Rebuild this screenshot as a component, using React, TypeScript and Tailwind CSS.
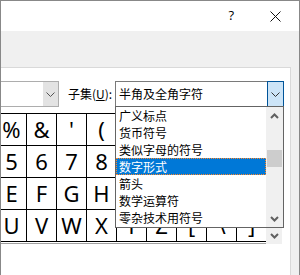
import React from 'react';

const cjk = { fontFamily: '"Noto Sans CJK SC", "Noto Sans", sans-serif' };

// cells hidden under the open dropdown list are left blank
const rows = [
  ['%', '&', "'", '(', '', '', '', '', ''],
  ['5', '6', '7', '8', '', '', '', '', ''],
  ['E', 'F', 'G', 'H', '', '', '', '', ''],
  ['U', 'V', 'W', 'X', 'Y', 'Z', '[', '\\', ']'],
];

const subsets = ['广义标点', '货币符号', '类似字母的符号', '数字形式', '箭头', '数学运算符', '零杂技术用符号'];

function ThinChevron({ color = '#444' }: { color?: string }) {
  return (
    <svg width="9" height="5" viewBox="0 0 9 5">
      <path d="M0.5 0.5 L4.5 4.5 L8.5 0.5" stroke={color} fill="none" strokeWidth="1" />
    </svg>
  );
}

function ScrollChevron({ up }: { up?: boolean }) {
  return (
    <svg width="9" height="6" viewBox="0 0 9 6">
      <path d={up ? 'M1 5 L4.5 1.5 L8 5' : 'M1 1 L4.5 4.5 L8 1'} stroke="#606060" fill="none" strokeWidth="2" />
    </svg>
  );
}

export default function App() {
  return (
    <div className="w-[300px] h-[275px] overflow-hidden bg-[#f0f0f0] border-x border-t border-[#888888] flex flex-col">
      {/* title bar */}
      <div className="h-[30px] shrink-0 bg-white flex items-center justify-end">
        <span className="text-[13px] text-black mr-[36px]" style={{ fontFamily: '"Open Sans", sans-serif' }}>?</span>
        <svg width="11" height="11" viewBox="0 0 11 11" className="mr-[18px]">
          <path d="M0.5 0.5 L10.5 10.5 M10.5 0.5 L0.5 10.5" stroke="#111" strokeWidth="1" />
        </svg>
      </div>

      <div className="flex-1 pt-[36px] pr-[8px]">
        <div className="h-full bg-white border-t border-r border-[#d9d9d9] pt-[13px]">
          {/* font + subset row */}
          <div className="flex items-center h-[26px] relative z-10">
            <div className="ml-[-104px] w-[162px] h-[26px] border border-[#adadad] flex bg-white">
              <div className="flex-1" />
              <div className="w-[15px] bg-[#e3e3e3] flex items-center justify-center">
                <ThinChevron color="#555" />
              </div>
            </div>
            <div className="ml-[9px] w-[47px] text-[12px] text-black leading-[26px]" style={cjk}>
              子集(<span className="underline">U</span>):
            </div>
            <div className="relative w-[169px] h-[26px] border border-[#7a7a7a] flex bg-white">
              <div className="flex-1 pl-[3px] text-[12px] leading-[24px] text-black" style={cjk}>半角及全角字符</div>
              <div className="w-[17px] -my-[1px] -mr-[1px] bg-[#cce4f7] border border-[#005499] flex items-center justify-center">
                <ThinChevron color="#333" />
              </div>
              {/* dropdown list */}
              <div className="absolute left-[-1px] top-[24px] w-[169px] h-[122px] border border-[#646464] bg-white flex">
                <div className="flex-1 flex flex-col">
                  {subsets.map((s) => (
                    <div
                      key={s}
                      className={
                        s === '数字形式'
                          ? 'h-[17px] pl-[2px] text-[12px] leading-[15px] text-white bg-[#0078d7] border border-dotted border-[#ff8728]'
                          : 'h-[17px] pl-[3px] text-[12px] leading-[17px] text-black'
                      }
                      style={cjk}
                    >
                      {s}
                    </div>
                  ))}
                </div>
                <div className="w-[17px] bg-[#f0f0f0] flex flex-col">
                  <div className="h-[17px] flex items-center justify-center">
                    <ScrollChevron up />
                  </div>
                  <div className="flex-1 pt-[26px]">
                    <div className="mx-[1px] h-[17px] bg-[#cdcdcd]" />
                  </div>
                  <div className="h-[17px] flex items-center justify-center">
                    <ScrollChevron />
                  </div>
                </div>
              </div>
            </div>
          </div>

          {/* symbol grid */}
          <div className="mt-[6px] ml-[-4px] flex">
            <div className="border-t border-black pb-[1px] border-b border-b-[#a0a0a0]">
              {rows.map((r, i) => (
                <div key={i} className="flex">
                  {r.map((c, j) => (
                    <div
                      key={j}
                      className={
                        (j < 8 ? 'w-[30px] border-r ' : 'w-[29px] ') +
                        'h-[32px] border-b border-black flex items-center justify-center text-[22px] text-black'
                      }
                      style={{ fontFamily: '"Noto Sans", "Open Sans", sans-serif' }}
                    >
                      {c}
                    </div>
                  ))}
                </div>
              ))}
            </div>
            <div className="w-[16px] bg-[#f0f0f0] flex flex-col justify-end">
              <div className="h-[17px] flex items-center justify-center">
                <ScrollChevron />
              </div>
            </div>
          </div>
        </div>
      </div>
    </div>
  );
}
